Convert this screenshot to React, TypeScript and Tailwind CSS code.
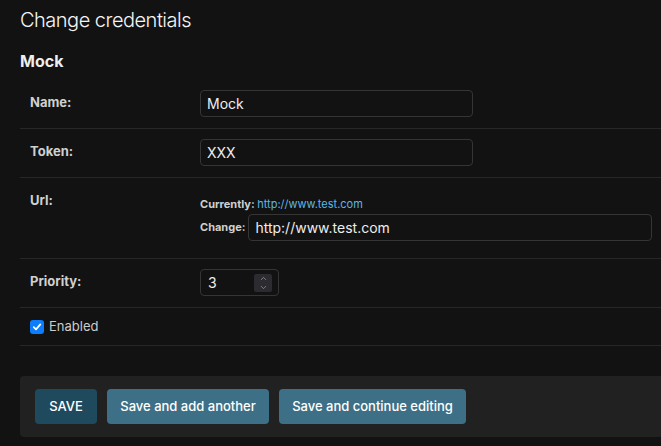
import { ChevronUp, ChevronDown } from 'lucide-react'

function Row({ label, children }: { label: string; children: React.ReactNode }) {
  return (
    <div className="flex items-start border-b border-[#272727] pl-[10px] pt-[10px] pb-[11px]">
      <label className="w-[170px] shrink-0 pt-[4px] text-[13px] leading-4 font-bold text-[#d0d0d0]">{label}</label>
      {children}
    </div>
  )
}

function TextInput({ value, className = '' }: { value: string; className?: string }) {
  return (
    <div
      className={`h-[27px] flex items-center rounded-[4px] border border-[#353535] bg-[#121212] px-[6px] text-[14px] text-[#eeeeee] ${className}`}
    >
      {value}
    </div>
  )
}

export default function App() {
  return (
    <div className="min-h-[446px] w-full bg-[#121212] pl-5 pt-[6px] font-['Inter',sans-serif] text-[#eeeeee]">
      <h1 className="text-[20px] leading-7 font-light tracking-[-0.5px] text-[#f5f5f5]">Change credentials</h1>
      <h2 className="mt-[17px] text-[16px] leading-5 font-bold text-[#eeeeee]">Mock</h2>

      <div className="mt-[9px]">
        <Row label="Name:">
          <TextInput value="Mock" className="w-[273px]" />
        </Row>

        <Row label="Token:">
          <TextInput value="XXX" className="w-[273px]" />
        </Row>

        <Row label="Url:">
          <div className="flex-1 pr-2">
            <p className="pt-[9px] text-[11px] leading-[14px] font-bold text-[#d0d0d0]">
              Currently: <span className="font-normal text-[#5fb6e2]">http://www.test.com</span>
            </p>
            <div className="mt-[3px] mb-[6px] flex items-center gap-[3px]">
              <span className="text-[11px] font-bold text-[#d0d0d0]">Change:</span>
              <TextInput value="http://www.test.com" className="w-[404px]" />
            </div>
          </div>
        </Row>

        <Row label="Priority:">
          <div className="h-[27px] w-[79px] flex items-center justify-between rounded-[4px] border border-[#353535] pl-[7px] pr-[6px] text-[14px] text-[#eeeeee]">
            <span>3</span>
            <span className="flex h-[18px] w-[18px] flex-col items-center justify-center rounded-[2px] bg-[#2b2b30] text-[#9a9aa2]">
              <ChevronUp size={9} strokeWidth={2} />
              <ChevronDown size={9} strokeWidth={2} />
            </span>
          </div>
        </Row>

        <div className="flex h-[38px] items-center gap-[5px] border-b border-[#272727] pl-[10px]">
          <span className="flex h-[14px] w-[14px] items-center justify-center rounded-[3px] bg-[#0b7dfd]">
            <svg width="10" height="10" viewBox="0 0 10 10" fill="none">
              <path d="M1.8 5.2 L4 7.4 L8.3 2.4" stroke="white" strokeWidth="1.7" strokeLinecap="round" strokeLinejoin="round" />
            </svg>
          </span>
          <span className="text-[13px] text-[#cccccc]">Enabled</span>
        </div>
      </div>

      <div className="mt-[30px] flex gap-[10px] rounded-l-[4px] bg-[#212121] px-[15px] py-[13px]">
        <button className="h-[35px] w-[62px] rounded-[4px] bg-[#1f4a5e] text-[13px] font-medium text-white">SAVE</button>
        <button className="h-[35px] w-[162px] rounded-[4px] bg-[#3d6f86] text-[13px] font-medium text-white">
          Save and add another
        </button>
        <button className="h-[35px] w-[187px] rounded-[4px] bg-[#3d6f86] text-[13px] font-medium text-white">
          Save and continue editing
        </button>
      </div>
    </div>
  )
}
